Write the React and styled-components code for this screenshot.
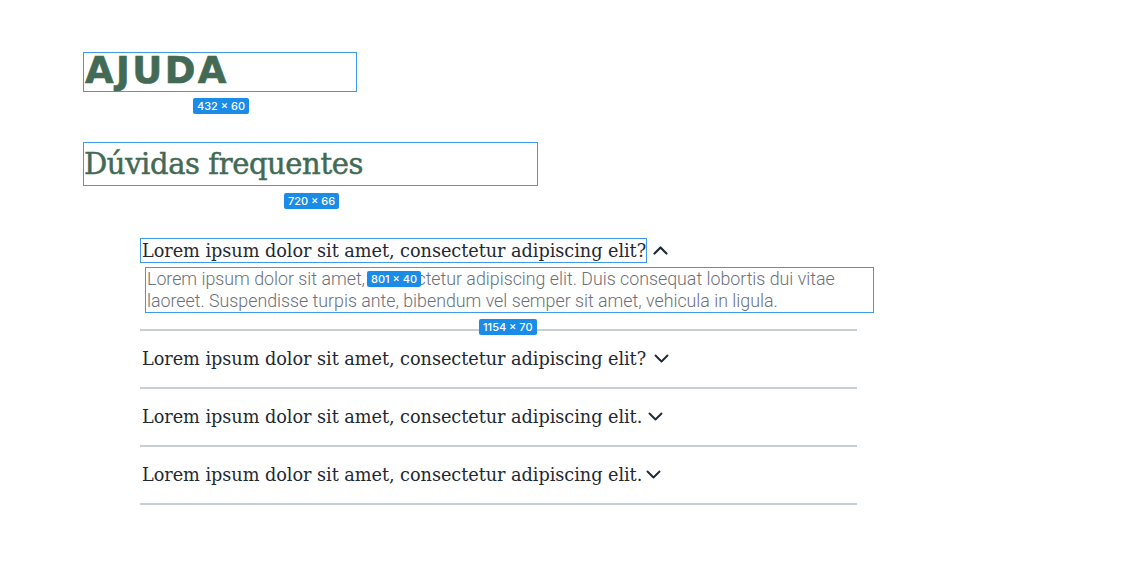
import React from 'react';
import styled, { createGlobalStyle } from 'styled-components';

const GlobalStyle = createGlobalStyle`
    body {
        margin: 0;
        background: #fff;
        font-family: Roboto, "Liberation Sans", sans-serif;
    }
`;

const Page = styled.main`
    padding: 52px 0 40px 83px;
`;

const Inspect = styled.div`
    position: relative;
    box-sizing: border-box;
    border: 1px solid #3d9be9;
`;

const Badge = styled.span`
    position: absolute;
    top: ${p => p.$top}px;
    left: ${p => p.$left}px;
    height: 16px;
    padding: 0 4px;
    border-radius: 2px;
    background: #1a8ce8;
    color: #fff;
    font-family: Inter, Roboto, sans-serif;
    font-weight: 500;
    font-size: 11px;
    line-height: 16px;
    white-space: nowrap;
    z-index: 2;
`;

const TitleBox = styled(Inspect)`
    width: 274px;
    height: 40px;
`;

const Title = styled.h1`
    margin: 0;
    padding-left: 1px;
    font-family: "DejaVu Sans", sans-serif;
    font-weight: 900;
    font-size: 37px;
    letter-spacing: 2.4px;
    line-height: 36px;
    color: #426a54;
    -webkit-text-stroke: 0.6px #426a54;
`;

const SubtitleBox = styled(Inspect)`
    width: 455px;
    height: 44px;
    margin-top: 50px;
`;

const Subtitle = styled.h2`
    margin: 0;
    font-family: "DejaVu Serif", serif;
    font-weight: normal;
    font-size: 29px;
    line-height: 42px;
    letter-spacing: -0.4px;
    color: #426a54;
    -webkit-text-stroke: 0.5px #426a54;
`;

const List = styled.ul`
    list-style: none;
    margin: 37px 0 0 57px;
    padding: 0;
    width: 717px;
`;

const Item = styled.li`
    position: relative;
    padding: 15px 0 16px;
    border-bottom: 2px solid #c6ced6;
`;

const Question = styled.div`
    display: flex;
    align-items: center;
    gap: ${p => p.$gap}px;
    height: 25px;
    color: #1e2933;
`;

const QuestionText = styled.span`
    box-sizing: border-box;
    height: 25px;
    padding-left: 1px;
    border: 1px solid ${p => (p.$inspect ? '#3d9be9' : 'transparent')};
    font-family: "DejaVu Serif", serif;
    font-size: 17.7px;
    letter-spacing: -0.05px;
    line-height: 24px;
    white-space: nowrap;
`;

const AnswerBox = styled(Inspect)`
    width: 729px;
    margin: 4px 0 0 5px;
    padding: 0 0 0 1px;
`;

const Answer = styled.p`
    margin: 0;
    font-family: Roboto, sans-serif;
    font-weight: 300;
    font-size: 17.8px;
    line-height: 22px;
    color: #6b7079;
`;

const Chevron = ({ up }) => (
    <svg width="15" height="9" viewBox="0 0 15 9" fill="none">
        <polyline
            points={up ? '1.5,7.5 7.5,1.5 13.5,7.5' : '1.5,1.5 7.5,7.5 13.5,1.5'}
            stroke="#1e2933"
            strokeWidth={up ? 2.2 : 1.9}
            strokeLinecap="round"
            strokeLinejoin="round"
        />
    </svg>
);

const questions = [
    { text: 'Lorem ipsum dolor sit amet, consectetur adipiscing elit?', gap: 7 },
    { text: 'Lorem ipsum dolor sit amet, consectetur adipiscing elit.', gap: 5 },
    { text: 'Lorem ipsum dolor sit amet, consectetur adipiscing elit.', gap: 3 },
];

export default function App() {
    return (
        <Page>
            <GlobalStyle />
            <TitleBox>
                <Title>AJUDA</Title>
                <Badge $top={45} $left={109}>432 × 60</Badge>
            </TitleBox>

            <SubtitleBox>
                <Subtitle>Dúvidas frequentes</Subtitle>
                <Badge $top={50} $left={200}>720 × 66</Badge>
            </SubtitleBox>

            <List>
                <Item>
                    <Question $gap={6}>
                        <QuestionText $inspect>
                            Lorem ipsum dolor sit amet, consectetur adipiscing elit?
                        </QuestionText>
                        <Chevron up />
                    </Question>
                    <AnswerBox>
                        <Answer>
                            Lorem ipsum dolor sit amet, consectetur adipiscing elit. Duis consequat lobortis dui vitae
                            laoreet. Suspendisse turpis ante, bibendum vel semper sit amet, vehicula in ligula.
                        </Answer>
                        <Badge $top={3} $left={221}>801 × 40</Badge>
                    </AnswerBox>
                    <Badge $top={96} $left={339}>1154 × 70</Badge>
                </Item>
                {questions.map((q, i) => (
                    <Item key={i}>
                        <Question $gap={q.gap}>
                            <QuestionText>{q.text}</QuestionText>
                            <Chevron />
                        </Question>
                    </Item>
                ))}
            </List>
        </Page>
    );
}
